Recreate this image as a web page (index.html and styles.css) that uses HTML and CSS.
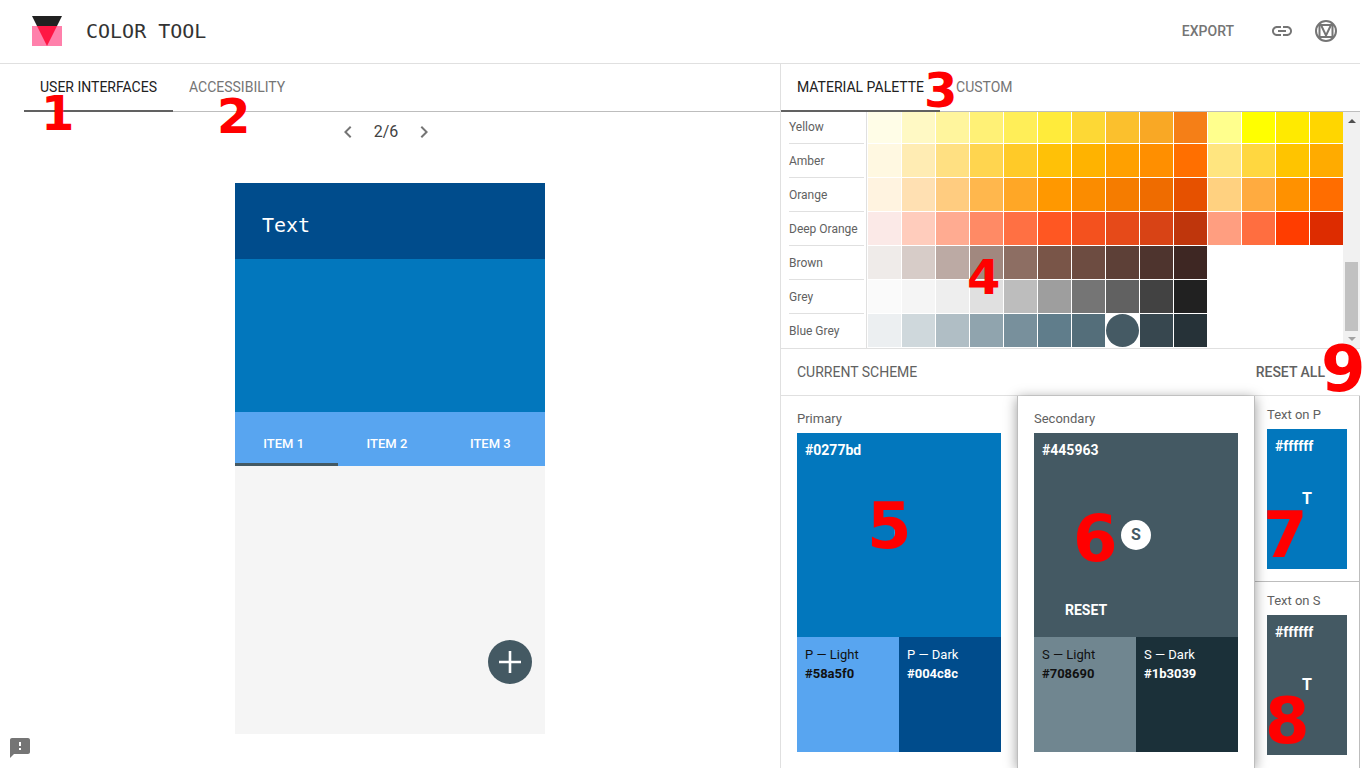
FILE: index.html
```html
<!doctype html>
<html lang="en">
<head>
  <meta charset="UTF-8">
  <meta name="viewport" content="width=device-width, initial-scale=1">
  <title>Color Tool</title>
  <link rel="stylesheet" href="styles.css">
</head>
<body>
<header class="header">
  <svg class="logo" viewBox="0 0 30 30" aria-hidden="true">
    <path fill="#212121" d="M0 0h30L15 30z"/>
    <path fill="#ff80ab" d="M0 10h30v20H0z"/>
    <path fill="#ff1744" d="M5 10h20L15 30z"/>
  </svg>
  <h1>COLOR TOOL</h1>
  <button class="export" type="button">EXPORT</button>
  <a class="icon-link" href="#link" aria-label="Copy link">
    <svg viewBox="0 0 24 24"><path d="M3.9 12c0-1.71 1.39-3.1 3.1-3.1h4V7H7c-2.76 0-5 2.24-5 5s2.24 5 5 5h4v-1.9H7c-1.71 0-3.1-1.39-3.1-3.1zM8 13h8v-2H8v2zm9-6h-4v1.9h4c1.71 0 3.1 1.39 3.1 3.1s-1.39 3.1-3.1 3.1h-4V17h4c2.76 0 5-2.24 5-5s-2.24-5-5-5z"/></svg>
  </a>
  <a class="icon-link" href="#material" aria-label="Material Design">
    <svg viewBox="0 0 24 24">
      <g fill="none" stroke="#757575" stroke-width="2">
        <circle cx="12" cy="12" r="10"/>
        <path d="M5.5 6h13v12h-13z"/>
        <path d="M7 6l5 10.500 5-10.500"/>
      </g>
    </svg>
  </a>
</header>

<main class="main">
  <section class="preview">
    <nav class="tabs tabs-preview">
      <a class="tab active" href="#ui">USER INTERFACES</a>
      <a class="tab" href="#accessibility">ACCESSIBILITY</a>
    </nav>
    <div class="pager">
      <button type="button" aria-label="Previous">
        <svg viewBox="0 0 24 24"><path d="M15.41 7.41L14 6l-6 6 6 6 1.41-1.41L10.83 12z"/></svg>
      </button>
      <span>2/6</span>
      <button type="button" aria-label="Next">
        <svg viewBox="0 0 24 24"><path d="M10 6L8.59 7.41 13.17 12l-4.58 4.59L10 18l6-6z"/></svg>
      </button>
    </div>
    <div class="phone">
      <div class="phone-bar">Text</div>
      <div class="phone-hero"></div>
      <div class="phone-tabs">
        <a class="active" href="#item1">ITEM 1</a>
        <a href="#item2">ITEM 2</a>
        <a href="#item3">ITEM 3</a>
      </div>
      <div class="phone-body">
        <button class="fab" type="button" aria-label="Add">
          <svg viewBox="0 0 22 22"><path d="M0 9.7h9.7V0h2.6v9.7H22v2.6h-9.7V22H9.7v-9.7H0z"/></svg>
        </button>
      </div>
    </div>
    <a class="feedback" href="#feedback" aria-label="Feedback">
      <svg viewBox="0 0 24 24"><path d="M20 2H4c-1.1 0-1.99.9-1.99 2L2 22l4-4h14c1.1 0 2-.9 2-2V4c0-1.1-.9-2-2-2zm-7 12h-2v-2h2v2zm0-4h-2V6h2v4z"/></svg>
    </a>
    <span class="mark mark-1">1</span>
    <span class="mark mark-2">2</span>
  </section>

  <section class="tool">
    <nav class="tabs">
      <a class="tab active" href="#palette">MATERIAL PALETTE</a>
      <a class="tab" href="#custom">CUSTOM</a>
    </nav>
    <div class="palette">
      <table class="palette-table">
        <tbody id="palette"></tbody>
      </table>
      <div class="scrollbar">
        <span class="arrow-up"></span>
        <span class="thumb"></span>
        <span class="arrow-down"></span>
      </div>
    </div>

    <div class="scheme-header">
      <h2>CURRENT SCHEME</h2>
      <button class="reset-all" type="button">RESET ALL</button>
    </div>
    <div class="scheme">
      <div class="color-card">
        <h3>Primary</h3>
        <div class="swatch primary">
          <b>#0277bd</b>
          <span class="letter">P</span>
        </div>
        <div class="variants">
          <div class="primary-light">P — Light<b>#58a5f0</b></div>
          <div class="primary-dark">P — Dark<b>#004c8c</b></div>
        </div>
      </div>
      <div class="color-card selected">
        <h3>Secondary</h3>
        <div class="swatch secondary">
          <b>#445963</b>
          <span class="letter filled">S</span>
          <button class="reset" type="button">RESET</button>
        </div>
        <div class="variants">
          <div class="secondary-light">S — Light<b>#708690</b></div>
          <div class="secondary-dark">S — Dark<b>#1b3039</b></div>
        </div>
      </div>
      <div class="text-cards">
        <div class="text-card">
          <h3>Text on P</h3>
          <div class="swatch primary">
            <b>#ffffff</b>
            <span class="letter">T</span>
          </div>
        </div>
        <div class="text-card">
          <h3>Text on S</h3>
          <div class="swatch secondary">
            <b>#ffffff</b>
            <span class="letter">T</span>
          </div>
        </div>
      </div>
    </div>
    <span class="mark mark-3">3</span>
    <span class="mark mark-4">4</span>
    <span class="mark large mark-5">5</span>
    <span class="mark large mark-6">6</span>
    <span class="mark large mark-7">7</span>
    <span class="mark large mark-8">8</span>
    <span class="mark large mark-9">9</span>
  </section>
</main>
<script src="script.js"></script>
</body>
</html>
```
FILE: styles.css
```css
*, *:before, *:after {
  box-sizing: border-box;
}

body {
  display: flex;
  flex-direction: column;
  height: 100vh;
  margin: 0;
  padding-right: 2px;
  overflow: hidden;
  font-family: Roboto, sans-serif;
  font-size: 14px;
  color: #616161;
  background: #fff;
}

h1, h2, h3 {
  margin: 0;
  font-weight: 400;
}

a {
  color: inherit;
  text-decoration: none;
}

button {
  padding: 0;
  border: 0;
  background: none;
  font: inherit;
  color: inherit;
  cursor: pointer;
}

svg {
  display: block;
  width: 24px;
  height: 24px;
  fill: #757575;
}

/* header */

.header {
  display: flex;
  align-items: center;
  flex: none;
  height: 64px;
  padding: 0 22px 1px 32px;
  border-bottom: 1px solid #e0e0e0;
}

.logo {
  width: 30px;
  height: 30px;
}

.header h1 {
  margin-left: 24px;
  font-family: "DejaVu Sans Mono", monospace;
  font-size: 20px;
  color: #333;
}

.export {
  margin-left: auto;
  margin-right: 16px;
  font-weight: 500;
  color: #757575;
}

.icon-link {
  margin-left: 20px;
}

/* layout */

.main {
  display: flex;
  flex: 1;
  min-height: 0;
}

.preview {
  position: relative;
  flex: 1;
}

.tool {
  position: relative;
  display: flex;
  flex-direction: column;
  width: 580px;
  border-left: 1px solid #e0e0e0;
}

.tabs {
  display: flex;
  flex: none;
  height: 48px;
  border-bottom: 1px solid #bdbdbd;
}

.tabs-preview {
  margin-left: 24px;
}

.tab {
  height: 48px;
  padding: 0 16px;
  line-height: 46px;
  color: #757575;
}

.tab.active {
  color: #212121;
  border-bottom: 2px solid #616161;
}

/* preview */

.pager {
  display: flex;
  justify-content: center;
  align-items: center;
  gap: 14px;
  height: 39px;
  margin: 0 8px 32px 0;
  font-size: 16px;
  color: #424242;
}

.phone {
  width: 310px;
  margin: 0 auto;
  color: #fff;
}

.phone-bar {
  height: 76px;
  padding-left: 27px;
  line-height: 84px;
  font-family: "DejaVu Sans Mono", monospace;
  font-size: 20px;
  background: #004c8c;
}

.phone-hero {
  height: 153px;
  background: #0277bd;
}

.phone-tabs {
  display: grid;
  grid-template-columns: repeat(3, 1fr);
  height: 54px;
  background: #58a5f0;
}

.phone-tabs a {
  padding: 22px 6px 0 0;
  line-height: 20px;
  font-size: 13px;
  font-weight: 500;
  text-align: center;
}

.phone-tabs .active {
  border-bottom: 3px solid #445963;
}

.phone-body {
  display: flex;
  justify-content: flex-end;
  align-items: flex-end;
  height: 268px;
  padding: 0 13px 50px;
  background: #f5f5f5;
}

.fab {
  display: grid;
  place-items: center;
  width: 44px;
  height: 44px;
  border-radius: 50%;
  background: #445963;
}

.fab svg {
  width: 22px;
  height: 22px;
  fill: #fff;
}

.feedback {
  position: absolute;
  left: 8px;
  bottom: 8px;
}

/* palette */

.palette {
  display: flex;
  align-items: flex-end;
  justify-content: space-between;
  flex: 1;
  min-height: 0;
  overflow: hidden;
}

.palette-table {
  margin-left: 8px;
  border-collapse: collapse;
}

.palette-table th, .palette-table td {
  padding: 0;
}

.palette-table th {
  padding-right: 2px;
  border-right: 1px solid #e0e0e0;
  font-size: 12px;
  font-weight: 400;
  text-align: left;
}

.palette-table th span {
  display: block;
  width: 75px;
  height: 34px;
  line-height: 35px;
  border-bottom: 1px solid #e0e0e0;
}

.palette-table tr:last-child th span {
  border-color: transparent;
}

.palette-table td {
  width: 34px;
  height: 34px;
}

.color {
  display: block;
  width: 33px;
  height: 33px;
  margin: 0 0 1px 1px;
}

.color.selected {
  border-radius: 50%;
}

.scrollbar {
  display: flex;
  flex-direction: column;
  align-items: center;
  align-self: stretch;
  width: 17px;
  padding: 7px 0;
  background: #f1f1f1;
}

.scrollbar .thumb {
  width: 13px;
  height: 69px;
  margin: auto 0 6px;
  background: #c1c1c1;
}

.arrow-up, .arrow-down {
  border: 4px solid transparent;
}

.arrow-up {
  border-top: 0;
  border-bottom-color: #505050;
}

.arrow-down {
  border-bottom: 0;
  border-top-color: #a3a3a3;
}

/* current scheme */

.scheme-header {
  display: flex;
  flex: none;
  justify-content: space-between;
  align-items: center;
  height: 48px;
  padding: 0 35px 0 16px;
  border-top: 1px solid #e0e0e0;
  border-bottom: 1px solid #e0e0e0;
}

.scheme-header h2 {
  font-size: 14px;
}

.reset-all {
  font-weight: 500;
}

.scheme {
  display: flex;
  flex: none;
}

.scheme h3 {
  font-size: 13px;
  line-height: 20px;
  margin-bottom: 4px;
}

.color-card {
  flex: 1;
  padding: 13px 16px 16px;
}

.color-card.selected {
  position: relative;
  flex: 1 0 2px;
  border: solid #bdbdbd;
  border-width: 0 1px;
  box-shadow: 0 2px 12px rgba(0, 0, 0, .4);
}

.swatch {
  display: grid;
  grid-template-rows: 1fr 30px 1fr;
  height: 204px;
  padding: 8px;
  line-height: 18px;
  color: #fff;
}

.letter {
  justify-self: center;
  width: 30px;
  line-height: 30px;
  border-radius: 50%;
  font-size: 16px;
  font-weight: 700;
  text-align: center;
}

.letter.filled {
  background: #fff;
  color: #445963;
}

.reset {
  place-self: end start;
  margin: 0 0 10px 23px;
  font-weight: 700;
}

.variants {
  display: flex;
}

.variants div {
  flex: 1;
  height: 115px;
  padding: 8px;
  font-size: 13px;
  line-height: 19px;
  color: #fff;
}

.variants b {
  display: block;
}

.primary {
  background: #0277bd;
}

.variants .primary-light {
  background: #58a5f0;
  color: #111;
}

.primary-dark {
  background: #004c8c;
}

.secondary {
  background: #445963;
}

.variants .secondary-light {
  background: #708690;
  color: #111;
}

.secondary-dark {
  background: #1b3039;
}

.text-cards {
  width: 105px;
  border-right: 1px solid #bdbdbd;
}

.text-card {
  padding: 9px 12px 12px;
}

.text-card:first-child {
  border-bottom: 1px solid #bdbdbd;
}

.text-card:last-child {
  padding-bottom: 13px;
}

.text-card .swatch {
  height: 140px;
}

/* numbered callouts */

.mark {
  position: absolute;
  font: bold 48px/1 "DejaVu Sans", sans-serif;
  color: #f00;
  pointer-events: none;
}

.mark.large {
  font-size: 64px;
}

.mark-1 { left: 41px; top: 25px; }
.mark-2 { left: 217px; top: 28px; }
.mark-3 { left: 143px; top: 2px; }
.mark-4 { left: 186px; top: 189px; }
.mark-5 { left: 86px; top: 430px; }
.mark-6 { left: 292px; top: 443px; }
.mark-7 { left: 482px; top: 439px; }
.mark-8 { left: 484px; top: 625px; }
.mark-9 { left: 540px; top: 273px; }
```
FILE: script.js
```js
const palette = {
  'Yellow': ['#fffde7', '#fff9c4', '#fff59d', '#fff176', '#ffee58', '#ffeb3b', '#fdd835', '#fbc02d', '#f9a825', '#f57f17', '#ffff8d', '#ffff00', '#ffea00', '#ffd600'],
  'Amber': ['#fff8e1', '#ffecb3', '#ffe082', '#ffd54f', '#ffca28', '#ffc107', '#ffb300', '#ffa000', '#ff8f00', '#ff6f00', '#ffe57f', '#ffd740', '#ffc400', '#ffab00'],
  'Orange': ['#fff3e0', '#ffe0b2', '#ffcc80', '#ffb74d', '#ffa726', '#ff9800', '#fb8c00', '#f57c00', '#ef6c00', '#e65100', '#ffd180', '#ffab40', '#ff9100', '#ff6d00'],
  'Deep Orange': ['#fbe9e7', '#ffccbc', '#ffab91', '#ff8a65', '#ff7043', '#ff5722', '#f4511e', '#e64a19', '#d84315', '#bf360c', '#ff9e80', '#ff6e40', '#ff3d00', '#dd2c00'],
  'Brown': ['#efebe9', '#d7ccc8', '#bcaaa4', '#a1887f', '#8d6e63', '#795548', '#6d4c41', '#5d4037', '#4e342e', '#3e2723'],
  'Grey': ['#fafafa', '#f5f5f5', '#eeeeee', '#e0e0e0', '#bdbdbd', '#9e9e9e', '#757575', '#616161', '#424242', '#212121'],
  'Blue Grey': ['#eceff1', '#cfd8dc', '#b0bec5', '#90a4ae', '#78909c', '#607d8b', '#546e7a', '#455a64', '#37474f', '#263238']
};
const selected = '#455a64';

document.getElementById('palette').innerHTML = Object.entries(palette).map(([name, colors]) => {
  const cells = colors.map((color) => {
    const cls = color === selected ? 'color selected' : 'color';
    return `<td><button type="button" class="${cls}" style="background: ${color}" aria-label="${name} ${color}"></button></td>`;
  });
  return `<tr><th scope="row"><span>${name}</span></th>${cells.join('')}</tr>`;
}).join('');
```
